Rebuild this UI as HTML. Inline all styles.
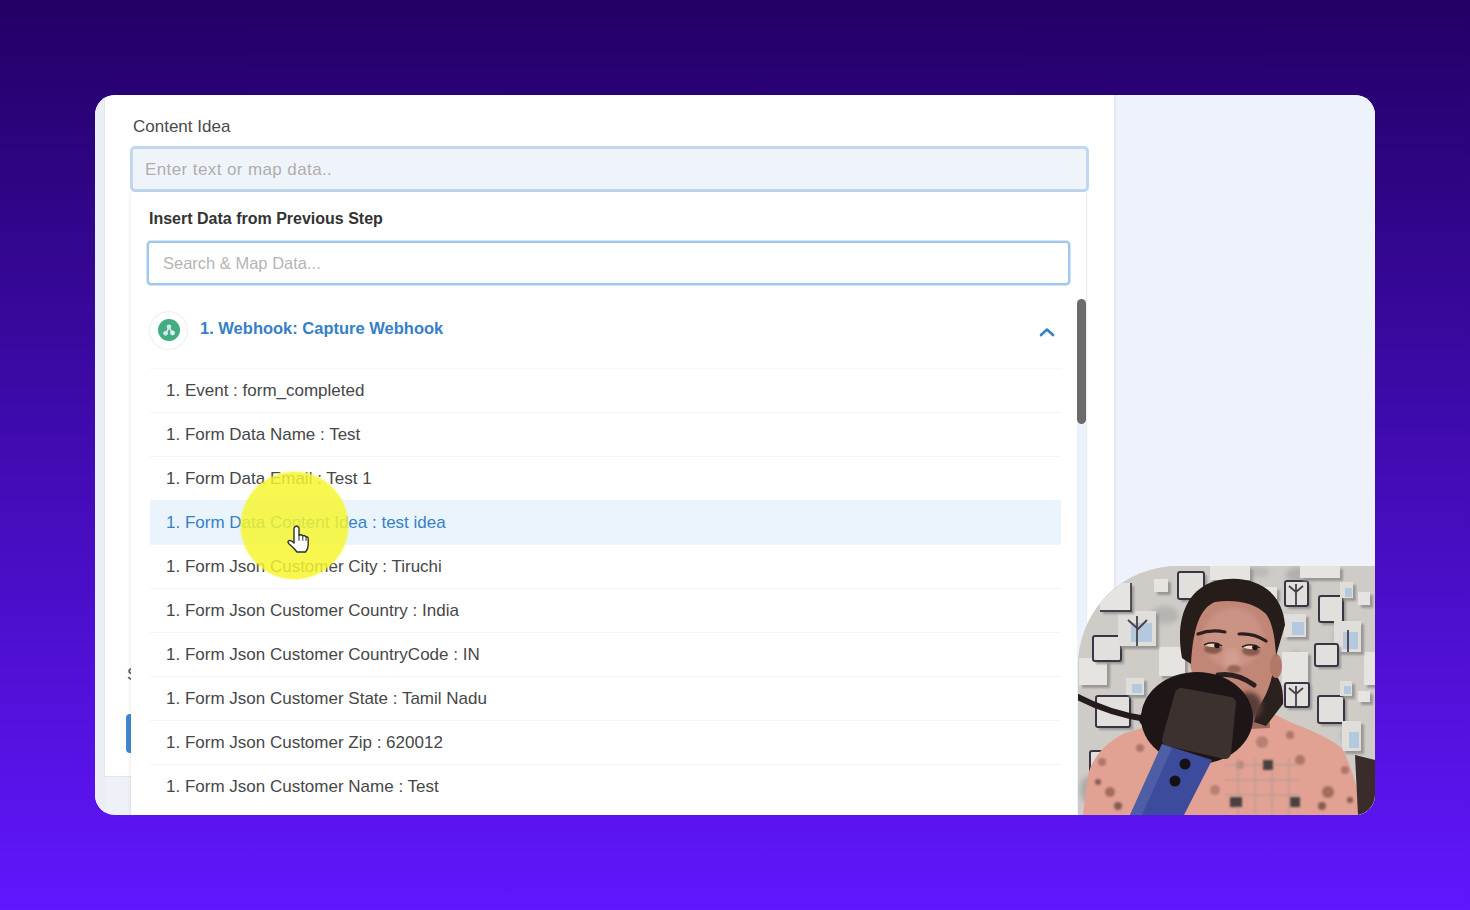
<!DOCTYPE html>
<html><head><meta charset="utf-8">
<style>
*{box-sizing:border-box;margin:0;padding:0}
html,body{width:1470px;height:910px;overflow:hidden;-webkit-font-smoothing:antialiased}
body{background:linear-gradient(to bottom,#220066 0%,#6016fe 100%);font-family:"Liberation Sans",sans-serif;position:relative}
.card{position:absolute;left:95px;top:95px;width:1280px;height:720px;border-radius:20px;overflow:hidden;background:#eef1f8}
.leftstrip{position:absolute;left:0;top:0;width:10px;height:720px;background:#eceef6}
.main{position:absolute;left:9px;top:0;width:1011px;height:682px;background:#fff;border-right:1px solid #e4e8f0;border-bottom:1px solid #e3e6ee;border-left:1px solid #e6e8ee}
.rpanel{position:absolute;left:1020px;top:0;width:260px;height:720px;background:#eef2fa;border-left:1px solid #e2e8f2}
.lbl{position:absolute;left:38px;top:22px;font-size:17px;color:#4a4a4a}
.inp{position:absolute;left:35px;top:51px;width:959px;height:46px;border:3px solid #c0d7ef;border-radius:5px;background:#eff4fb}
.inp span{position:absolute;left:12px;top:11px;font-size:17px;color:#b0aeab;letter-spacing:0.4px}
.dd{position:absolute;left:36px;top:97px;width:956px;height:640px;background:#fff;box-shadow:-1px 0 3px rgba(0,0,0,0.08);border-right:1px solid #ececec}
.ddt{position:absolute;left:18px;top:18px;font-size:16px;font-weight:bold;color:#333}
.sinp{position:absolute;left:16px;top:49px;width:923px;height:44px;border:2px solid #a0c7ed;border-radius:4px;background:#fff;box-shadow:0 0 0 1px #d3e5f7}
.sinp span{position:absolute;left:14px;top:11px;font-size:16.5px;color:#b5b5b5}
.hdr-ic{position:absolute;left:18px;top:119px;width:39px;height:39px;border-radius:50%;background:#fff;border:1.5px solid #ebedf1}
.hdr-ic i{position:absolute;left:7.5px;top:7px;width:22px;height:22px;border-radius:50%;background:#40ae7f}
.hdr-t{position:absolute;left:69px;top:127px;font-size:16.5px;font-weight:bold;color:#3580c8}
.chev{position:absolute;left:908px;top:135px;width:16px;height:10px}
.sb{position:absolute;left:946px;top:107px;width:9px;height:125px;border-radius:5px;background:#6b6b6b}
.sbt{position:absolute;left:946px;top:232px;width:9px;height:420px;background:#eaf3fc}
.row{position:absolute;left:19px;width:911px;height:44px;line-height:44px;padding-left:16px;font-size:17px;color:#474747;border-top:1px solid #f4f4f4;white-space:nowrap}
.row.hl{background:#eaf4fd;color:#3580c8;border-top-color:#eaf4fd}
.sbtn{position:absolute;left:31px;top:619px;width:20px;height:39px;border-radius:4px;background:#3f86d0}
.sch{position:absolute;left:32px;top:570px;font-size:17px;color:#555}
.yc{position:absolute;left:146px;top:377px;width:107px;height:107px;border-radius:50%;background:rgba(245,245,45,0.84);box-shadow:0 0 2px 1px rgba(245,245,80,0.45)}
.cur{position:absolute;left:191px;top:429px;width:23px;height:29px}
.cam{position:absolute;left:983px;top:471px;width:297px;height:249px;border-top-left-radius:100px;overflow:hidden;background:#d3d0cc}
.cam svg{position:absolute;left:0;top:0}
</style></head>
<body>
<div class="card">
  <div class="leftstrip"></div>
  <div class="main">
  </div>
  <div class="rpanel"></div>
  <div class="sch">S</div>
  <div class="sbtn"></div>
  <div class="lbl">Content Idea</div>
  <div class="inp"><span>Enter text or map data..</span></div>
  <div class="dd">
    <div class="ddt">Insert Data from Previous Step</div>
    <div class="sinp"><span>Search &amp; Map Data...</span></div>
    <div class="hdr-ic"><i><svg width="22" height="22" viewBox="0 0 22 22" style="position:absolute;left:0;top:0"><path d="M11,8.5 L8,14 M11,8.5 L14.3,13.6" stroke="#d6e4f3" stroke-width="1.6"/><circle cx="11" cy="7.8" r="2.3" fill="#d6e4f3"/><circle cx="7.6" cy="14.3" r="2.4" fill="#d6e4f3"/><circle cx="14.5" cy="14" r="2.4" fill="#e6eef8"/></svg></i></div>
    <div class="hdr-t">1. Webhook: Capture Webhook</div>
    <svg class="chev" viewBox="0 0 16 10"><path d="M2 8 L8 2.5 L14 8" fill="none" stroke="#3580c8" stroke-width="2.6" stroke-linecap="round" stroke-linejoin="round"/></svg>
    <div class="sbt"></div>
    <div class="sb"></div>
    <div class="row" style="top:176px;border-top-color:#f8f8f8">1. Event : form_completed</div>
    <div class="row" style="top:220px">1. Form Data Name : Test</div>
    <div class="row" style="top:264px">1. Form Data Email : Test 1</div>
    <div class="row hl" style="top:308px">1. Form Data Content Idea : test idea</div>
    <div class="row" style="top:352px">1. Form Json Customer City : Tiruchi</div>
    <div class="row" style="top:396px">1. Form Json Customer Country : India</div>
    <div class="row" style="top:440px">1. Form Json Customer CountryCode : IN</div>
    <div class="row" style="top:484px">1. Form Json Customer State : Tamil Nadu</div>
    <div class="row" style="top:528px">1. Form Json Customer Zip : 620012</div>
    <div class="row" style="top:572px">1. Form Json Customer Name : Test</div>
  </div>
  <div class="cam">
    <svg width="297" height="249" viewBox="1078 566 297 249">
      <defs>
        <filter id="bl1" x="-20%" y="-20%" width="140%" height="140%"><feGaussianBlur stdDeviation="1.2"/></filter>
        <filter id="bl2" x="-20%" y="-20%" width="140%" height="140%"><feGaussianBlur stdDeviation="2.5"/></filter>
      </defs>
      <rect x="1078" y="566" width="297" height="249" fill="#cfccc8"/>
      <g id="wall">
      <g filter="url(#bl2)" opacity="0.8">
        <ellipse cx="1096" cy="672" rx="12" ry="11" fill="#a6a4a2"/><ellipse cx="1138" cy="628" rx="12" ry="10" fill="#a9a7a6"/>
        <ellipse cx="1165" cy="615" rx="14" ry="9" fill="#b0aeac"/><ellipse cx="1296" cy="664" rx="11" ry="12" fill="#a8a6a4"/>
        <ellipse cx="1344" cy="636" rx="11" ry="12" fill="#aab0ba"/><ellipse cx="1350" cy="735" rx="9" ry="12" fill="#aab0ba"/>
        <ellipse cx="1300" cy="575" rx="14" ry="8" fill="#aaa8a6"/><ellipse cx="1090" cy="790" rx="10" ry="14" fill="#a4a2a0"/>
        <ellipse cx="1250" cy="572" rx="20" ry="6" fill="#b6b4b2"/>
      </g>
      <rect x="1082" y="661" width="28" height="27" fill="#9a9896" filter="url(#bl1)"/>
      <rect x="1079" y="658" width="28" height="27" fill="#e6e4e1"/>
      <rect x="1162" y="650" width="26" height="29" fill="#9a9896" filter="url(#bl1)"/>
      <rect x="1159" y="647" width="26" height="29" fill="#e6e4e1"/>
      <rect x="1285" y="655" width="26" height="33" fill="#9a9896" filter="url(#bl1)"/>
      <rect x="1282" y="652" width="26" height="33" fill="#e6e4e1"/>
      <rect x="1367" y="655" width="14" height="33" fill="#9a9896" filter="url(#bl1)"/>
      <rect x="1364" y="652" width="14" height="33" fill="#e6e4e1"/>
      <rect x="1096" y="639" width="28" height="25" fill="#9a9896" filter="url(#bl1)"/>
      <rect x="1093" y="636" width="28" height="25" fill="#e2e0dc" stroke="#3a3444" stroke-width="2" rx="2"/>
      <rect x="1099" y="699" width="34" height="31" fill="#9a9896" filter="url(#bl1)"/>
      <rect x="1096" y="696" width="34" height="31" fill="#e2e0dc" stroke="#3a3444" stroke-width="2" rx="2"/>
      <rect x="1093" y="754" width="21" height="27" fill="#9a9896" filter="url(#bl1)"/>
      <rect x="1090" y="751" width="21" height="27" fill="#e2e0dc" stroke="#3a3444" stroke-width="2" rx="2"/>
      <rect x="1157" y="582" width="14" height="13" fill="#9a9896" filter="url(#bl1)"/>
      <rect x="1154" y="579" width="14" height="13" fill="#e6e4e1"/>
      <rect x="1181" y="575" width="26" height="27" fill="#9a9896" filter="url(#bl1)"/>
      <rect x="1178" y="572" width="26" height="27" fill="#e2e0dc" stroke="#3a3444" stroke-width="2" rx="2"/>
      <rect x="1121" y="614" width="38" height="35" fill="#9a9896" filter="url(#bl1)"/>
      <rect x="1118" y="611" width="38" height="35" fill="#e0dedb"/><rect x="1131" y="623" width="21" height="19" fill="#b4c8de"/>
      <rect x="1129" y="681" width="18" height="17" fill="#9a9896" filter="url(#bl1)"/>
      <rect x="1126" y="678" width="18" height="17" fill="#e0dedb"/><rect x="1132" y="684" width="10" height="9" fill="#b4c8de"/>
      <rect x="1288" y="584" width="23" height="25" fill="#9a9896" filter="url(#bl1)"/>
      <rect x="1285" y="581" width="23" height="25" fill="#e2e0dc" stroke="#3a3444" stroke-width="2" rx="2"/>
      <rect x="1322" y="599" width="24" height="26" fill="#9a9896" filter="url(#bl1)"/>
      <rect x="1319" y="596" width="24" height="26" fill="#e2e0dc" stroke="#3a3444" stroke-width="2" rx="2"/>
      <rect x="1287" y="617" width="22" height="23" fill="#9a9896" filter="url(#bl1)"/>
      <rect x="1284" y="614" width="22" height="23" fill="#e0dedb"/><rect x="1292" y="622" width="12" height="13" fill="#b4c8de"/>
      <rect x="1337" y="624" width="27" height="31" fill="#9a9896" filter="url(#bl1)"/>
      <rect x="1334" y="621" width="27" height="31" fill="#e0dedb"/><rect x="1343" y="632" width="15" height="17" fill="#b4c8de"/>
      <rect x="1318" y="647" width="23" height="22" fill="#9a9896" filter="url(#bl1)"/>
      <rect x="1315" y="644" width="23" height="22" fill="#e2e0dc" stroke="#3a3444" stroke-width="2" rx="2"/>
      <rect x="1361" y="595" width="12" height="13" fill="#9a9896" filter="url(#bl1)"/>
      <rect x="1358" y="592" width="12" height="13" fill="#e6e4e1"/>
      <rect x="1343" y="585" width="13" height="16" fill="#9a9896" filter="url(#bl1)"/>
      <rect x="1340" y="582" width="13" height="16" fill="#e0dedb"/><rect x="1345" y="588" width="7" height="9" fill="#b4c8de"/>
      <rect x="1288" y="686" width="24" height="24" fill="#9a9896" filter="url(#bl1)"/>
      <rect x="1285" y="683" width="24" height="24" fill="#e2e0dc" stroke="#3a3444" stroke-width="2" rx="2"/>
      <rect x="1321" y="699" width="26" height="27" fill="#9a9896" filter="url(#bl1)"/>
      <rect x="1318" y="696" width="26" height="27" fill="#e2e0dc" stroke="#3a3444" stroke-width="2" rx="2"/>
      <rect x="1343" y="684" width="12" height="15" fill="#9a9896" filter="url(#bl1)"/>
      <rect x="1340" y="681" width="12" height="15" fill="#e0dedb"/><rect x="1344" y="686" width="7" height="8" fill="#b4c8de"/>
      <rect x="1361" y="694" width="12" height="11" fill="#9a9896" filter="url(#bl1)"/>
      <rect x="1358" y="691" width="12" height="11" fill="#e6e4e1"/>
      <rect x="1345" y="724" width="19" height="30" fill="#9a9896" filter="url(#bl1)"/>
      <rect x="1342" y="721" width="19" height="30" fill="#e0dedb"/><rect x="1349" y="732" width="10" height="16" fill="#b4c8de"/>
      <rect x="1267" y="590" width="13" height="12" fill="#9a9896" filter="url(#bl1)"/>
      <rect x="1264" y="587" width="13" height="12" fill="#e6e4e1"/>
      <rect x="1103" y="586" width="31" height="28" fill="#9a9896" filter="url(#bl1)"/>
      <rect x="1100" y="583" width="31" height="28" fill="#e6e4e1"/>
      <rect x="1213" y="569" width="40" height="14" fill="#9a9896" filter="url(#bl1)"/>
      <rect x="1210" y="566" width="40" height="14" fill="#e6e4e1"/>
      <rect x="1303" y="569" width="40" height="12" fill="#9a9896" filter="url(#bl1)"/>
      <rect x="1300" y="566" width="40" height="12" fill="#e6e4e1"/>
      <path d="M1131,583 L1131,611 L1100,611 M1137,646 L1137,616 M1137,628 L1128,620 M1137,630 L1147,620" stroke="#4a4048" stroke-width="1.8" fill="none"/>
      <path d="M1296,606 L1296,584 M1296,592 L1289,586 M1296,592 L1303,586 M1296,707 L1296,686 M1296,694 L1289,688 M1296,694 L1303,688 M1348,652 L1348,630" stroke="#4a4048" stroke-width="1.8" fill="none"/>
      </g>
      <g id="person">
      <path d="M1083,815 L1088,775 Q1095,748 1125,733 L1170,720 L1230,722 Q1255,720 1270,712 L1290,722 Q1325,735 1342,748 Q1356,775 1362,815 Z" fill="#e2a293"/>
      <g filter="url(#bl1)" opacity="0.6">
        <circle cx="1110" cy="792" r="5" fill="#7a4a40"/><circle cx="1300" cy="760" r="5" fill="#8a5a4e"/><circle cx="1328" cy="792" r="6" fill="#7a4a40"/>
        <circle cx="1262" cy="742" r="6" fill="#9a6a5e"/><circle cx="1102" cy="762" r="4" fill="#8a5a4e"/><circle cx="1140" cy="748" r="4" fill="#8a5a4e"/>
        <circle cx="1118" cy="806" r="4" fill="#4a2e28"/><circle cx="1290" cy="735" r="4" fill="#8a5a4e"/><circle cx="1345" cy="770" r="4" fill="#8a5a4e"/>
        <circle cx="1322" cy="806" r="4" fill="#4a2e28"/><circle cx="1215" cy="790" r="5" fill="#9a6a5e"/><circle cx="1350" cy="800" r="3" fill="#4a2e28"/>
        <circle cx="1098" cy="782" r="3" fill="#4a2e28"/><circle cx="1240" cy="765" r="4" fill="#a07060"/>
      </g>
      <g filter="url(#bl1)">
        <path d="M1225,765 H1300 M1225,780 H1300 M1225,795 H1300 M1238,758 V815 M1255,758 V815 M1272,758 V815 M1289,758 V815" stroke="#b89c96" stroke-width="2" opacity="0.7"/>
        <rect x="1263" y="760" width="10" height="10" fill="#4a4040"/><rect x="1230" y="797" width="12" height="10" fill="#4a4040"/><rect x="1290" y="797" width="10" height="10" fill="#4a4040"/>
      </g>
      <path d="M1225,700 L1268,698 L1270,728 L1230,730 Z" fill="#9c6a5c"/>
      <path d="M1272,672 Q1284,680 1283,704 L1266,726 L1254,722 L1262,690 Z" fill="#2a201e"/>
      <path d="M1188,645 C1186,612 1203,596 1232,596 C1262,596 1279,614 1276,648 C1274,684 1262,714 1240,720 C1210,718 1190,690 1188,645 Z" fill="#c28676"/>
      <ellipse cx="1233" cy="638" rx="30" ry="30" fill="#cf998a" filter="url(#bl2)" opacity="0.7"/>
      <ellipse cx="1232" cy="660" rx="8" ry="12" fill="#d6a494" filter="url(#bl2)" opacity="0.7"/>
      <ellipse cx="1276" cy="666" rx="6" ry="12" fill="#b47868"/>
      <ellipse cx="1248" cy="706" rx="14" ry="14" fill="#5a3e38" filter="url(#bl2)"/>
      <path d="M1182,658 C1175,620 1186,590 1215,581 C1246,573 1282,585 1285,625 L1276,656 C1275,636 1272,622 1266,614 C1255,602 1232,599 1215,602 C1200,608 1193,628 1191,664 Z" fill="#261c1a"/>
      <path d="M1198,634 Q1211,629 1225,632 M1239,634 Q1254,633 1266,641" stroke="#2c201e" stroke-width="3.2" fill="none" stroke-linecap="round"/>
      <ellipse cx="1213" cy="649" rx="9" ry="5" fill="#8a5a4c" filter="url(#bl1)"/><ellipse cx="1251" cy="651" rx="9" ry="5" fill="#8a5a4c" filter="url(#bl1)"/>
      <path d="M1204,645 Q1213,640 1222,646 Q1213,649 1204,645 Z" fill="#e8d6cc"/><path d="M1242,647 Q1251,642 1260,648 Q1251,651 1242,647 Z" fill="#e8d6cc"/>
      <circle cx="1217" cy="645.5" r="2.8" fill="#1e1414"/><circle cx="1255" cy="647.5" r="2.8" fill="#1e1414"/>
      <path d="M1204,645 Q1213,640 1222,646 M1242,647 Q1251,642 1260,648" stroke="#2a1e1c" stroke-width="1.5" fill="none"/>
      <ellipse cx="1234" cy="669" rx="7" ry="4" fill="#9a6456" filter="url(#bl1)"/>
      <path d="M1218,675 Q1236,672 1254,685" stroke="#2c201e" stroke-width="5" fill="none" stroke-linecap="round"/>
      <path d="M1076,696 Q1108,713 1146,719" stroke="#241c1c" stroke-width="6" fill="none"/>
      <ellipse cx="1197" cy="718" rx="56" ry="46" fill="#1e1616"/>
      <circle cx="1146" cy="719" r="7" fill="#1e1616"/>
      <path d="M1181,694 L1230,703 L1225,753 L1168,740 Z" fill="#3b312f" stroke="#3b312f" stroke-width="12" stroke-linejoin="round"/>
      <path d="M1162,744 L1212,760 L1184,815 L1130,815 Z" fill="#3d4b9d"/>
      <path d="M1162,744 L1172,748 L1142,815 L1130,815 Z" fill="#5a6aa8" opacity="0.6"/>
      <circle cx="1185" cy="764" r="5.5" fill="#141014"/><circle cx="1175" cy="781" r="5.5" fill="#141014"/>
      <path d="M1355,755 L1375,760 L1375,815 L1358,815 Z" fill="#3a2c2a"/>
      </g>
    </svg>
  </div>
  <div class="yc"></div>
  <svg class="cur" viewBox="0 0 23 29"><path d="M8,4 Q10.5,0 13,4 L13,11.5 Q15,10 16.8,11.8 Q18.6,10.8 20,12.8 Q22.2,12.6 22.2,15.2 L22.2,20.5 Q22.2,25 19.6,28 L11,28 Q8,24 3.2,20 Q0.9,17.6 3.1,16.6 Q5.6,16.2 8,19 Z" fill="#fff" stroke="#2e2e2e" stroke-width="1.4" stroke-linejoin="round"/><path d="M13,11.5 V16.8 M16.8,11.8 V16.8 M20,12.8 V16.8" stroke="#2e2e2e" stroke-width="1"/></svg>
</div>
</body></html>
